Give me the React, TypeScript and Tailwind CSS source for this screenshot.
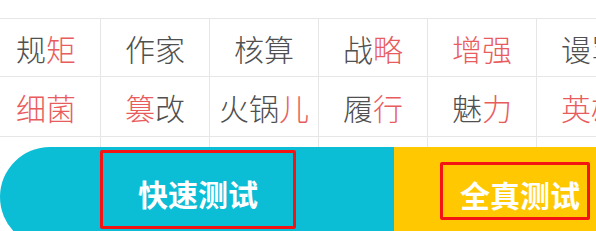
import React from "react";

type Part = { t: string; red?: boolean };
const row1: Part[][] = [
  [{ t: "规" }, { t: "矩", red: true }],
  [{ t: "作家" }],
  [{ t: "核算" }],
  [{ t: "战" }, { t: "略", red: true }],
  [{ t: "增强", red: true }],
  [{ t: "谩" }, { t: "骂" }],
];
const row2: Part[][] = [
  [{ t: "细菌", red: true }],
  [{ t: "篡", red: true }, { t: "改" }],
  [{ t: "火锅" }, { t: "儿", red: true }],
  [{ t: "履" }, { t: "行", red: true }],
  [{ t: "魅" }, { t: "力", red: true }],
  [{ t: "英雄", red: true }],
];

function Cell({ parts, h }: { parts: Part[]; h: string }) {
  return (
    <div
      className={`flex items-center justify-center border-r border-b border-[#e6e6e6] whitespace-nowrap text-[30px] font-light leading-none ${h}`}
    >
      {parts.map((p, i) => (
        <span key={i} className={p.red ? "text-[#e95c5e]" : "text-[#505050]"}>
          {p.t}
        </span>
      ))}
    </div>
  );
}

export default function App() {
  return (
    <div
      className="w-[596px] h-[231px] overflow-hidden bg-white flex flex-col"
      style={{ fontFamily: '"Noto Sans CJK SC", "Noto Sans", sans-serif' }}
    >
      <div className="h-[18px] shrink-0" />
      <div className="ml-[-8px] w-[654px] shrink-0 grid grid-cols-6 border-t border-[#e6e6e6]">
        {row1.map((p, i) => (
          <Cell key={"a" + i} parts={p} h="h-[58px]" />
        ))}
        {row2.map((p, i) => (
          <Cell key={"b" + i} parts={p} h="h-[60px]" />
        ))}
        {row2.map((_, i) => (
          <div key={"c" + i} className="h-[10px] border-r border-[#e6e6e6]" />
        ))}
      </div>
      <div className="flex h-[100px] shrink-0">
        <div className="w-[394px] bg-[#0bbdd5] rounded-l-[50px] flex justify-center pt-[3px] pl-[2px]">
          <div className="w-[196px] h-[79px] border-[3px] border-[#f41414] rounded-[2px] flex items-center justify-center pt-[7px] text-white font-bold text-[30px] leading-none">
            快速测试
          </div>
        </div>
        <div className="flex-1 bg-[#ffc800] flex items-start pl-[46px] pt-[15px]">
          <div className="w-[150px] h-[58px] border-[3px] border-[#f41414] rounded-[2px] flex items-center justify-center pt-[5px] pl-[10px] text-white font-bold text-[30px] leading-none whitespace-nowrap">
            全真测试
          </div>
        </div>
      </div>
    </div>
  );
}
